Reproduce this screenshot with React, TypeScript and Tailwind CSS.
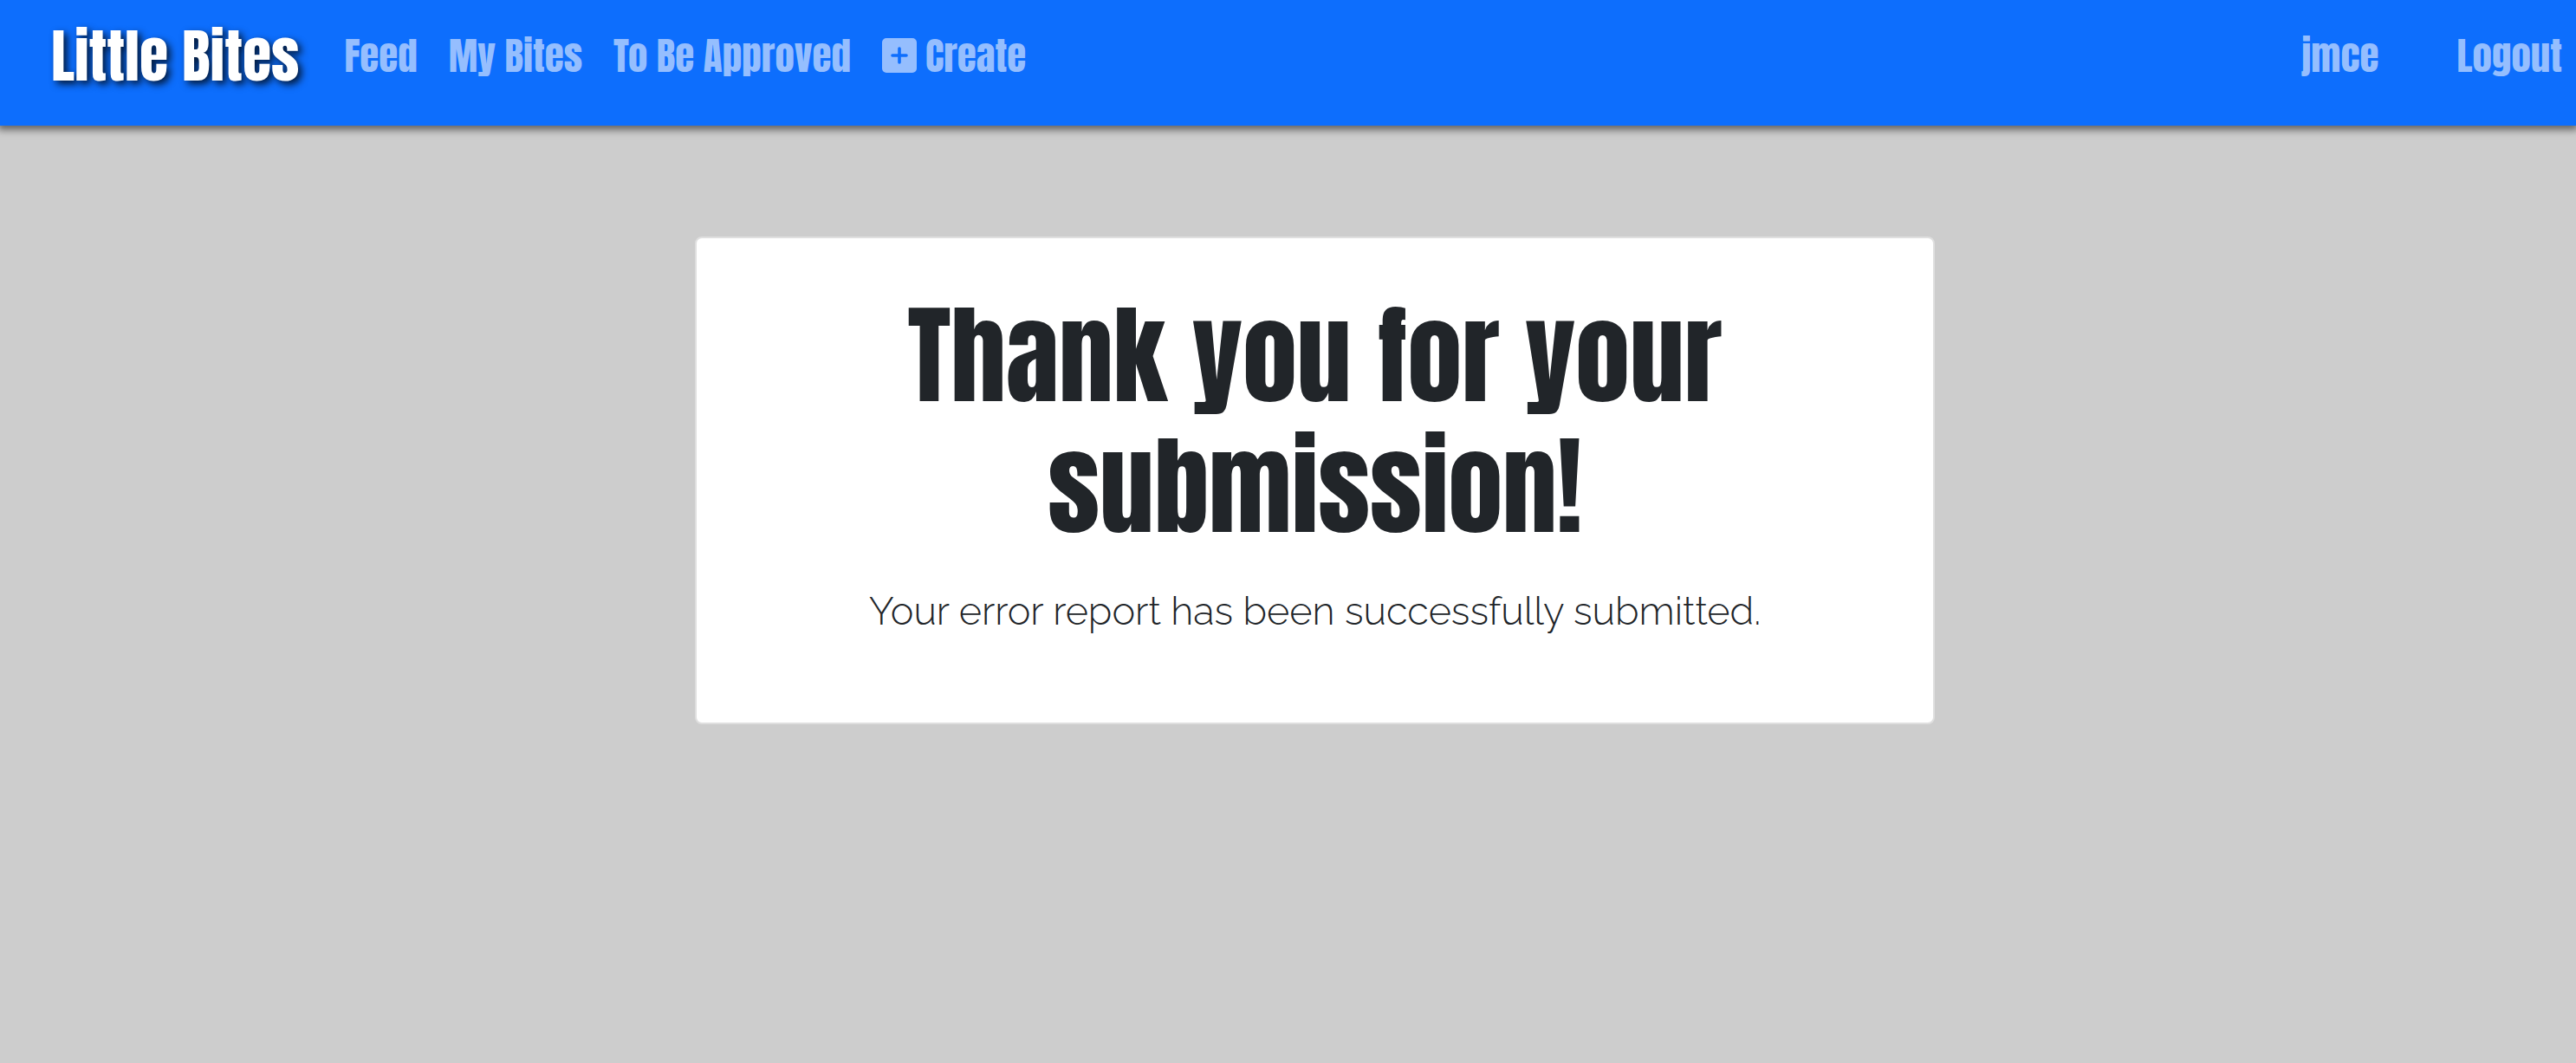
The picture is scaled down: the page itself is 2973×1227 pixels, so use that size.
const links = ['Feed', 'My Bites', 'To Be Approved'];

function PlusSquare() {
  return (
    <svg viewBox="0 0 40 40" className="size-10" aria-hidden="true">
      <path
        fill="currentColor"
        fillRule="evenodd"
        d="M5 0h30a5 5 0 0 1 5 5v30a5 5 0 0 1-5 5H5a5 5 0 0 1-5-5V5a5 5 0 0 1 5-5zM18.2 12v6.2H12a1.8 1.8 0 0 0 0 3.6h6.2V28a1.8 1.8 0 0 0 3.6 0v-6.2H28a1.8 1.8 0 0 0 0-3.6h-6.2V12a1.8 1.8 0 0 0-3.6 0z"
      />
    </svg>
  );
}

export default function App() {
  return (
    <div className="flex min-h-screen flex-col bg-[#cdcdcd] text-[#212529]">
      <header className="flex h-[145px] items-start bg-[#0d6efd] pt-3.5 pr-4 pl-[59px] font-['Anton',sans-serif] text-[45px] leading-[68px] font-normal whitespace-nowrap text-[#95befe] shadow-[0_3px_8px_2px_rgba(0,0,0,0.5)]">
        <a
          href="#home"
          className="mr-[52px] text-[68px] leading-[100px] text-white [text-shadow:4px_4px_8px_rgba(0,0,0,0.8)]"
        >
          Little Bites
        </a>
        <nav className="flex flex-1 items-center gap-9 pt-4">
          {links.map((label) => (
            <a key={label} href="#nav">
              {label}
            </a>
          ))}
          <a href="#create" className="flex items-center gap-2.5">
            <PlusSquare />
            Create
          </a>
          <a href="#profile" className="ml-auto">
            jmce
          </a>
          <a href="#logout" className="ml-[54px]">
            Logout
          </a>
        </nav>
      </header>
      <main className="flex justify-center pt-32 pl-[62px]">
        <div className="w-1/2 px-3">
          <section className="rounded-lg border-2 border-[#dfdfdf] bg-white px-16 pt-[59px] pb-[94px] text-center">
            <h1 className="mx-auto max-w-[1100px] font-['Anton',sans-serif] text-[126px] leading-[151px] font-normal">
              Thank you for your submission!
            </h1>
            <p className="mt-9 font-['Raleway',sans-serif] text-[45px] leading-[68px] font-light">
              Your error report has been successfully submitted.
            </p>
          </section>
        </div>
      </main>
    </div>
  );
}
